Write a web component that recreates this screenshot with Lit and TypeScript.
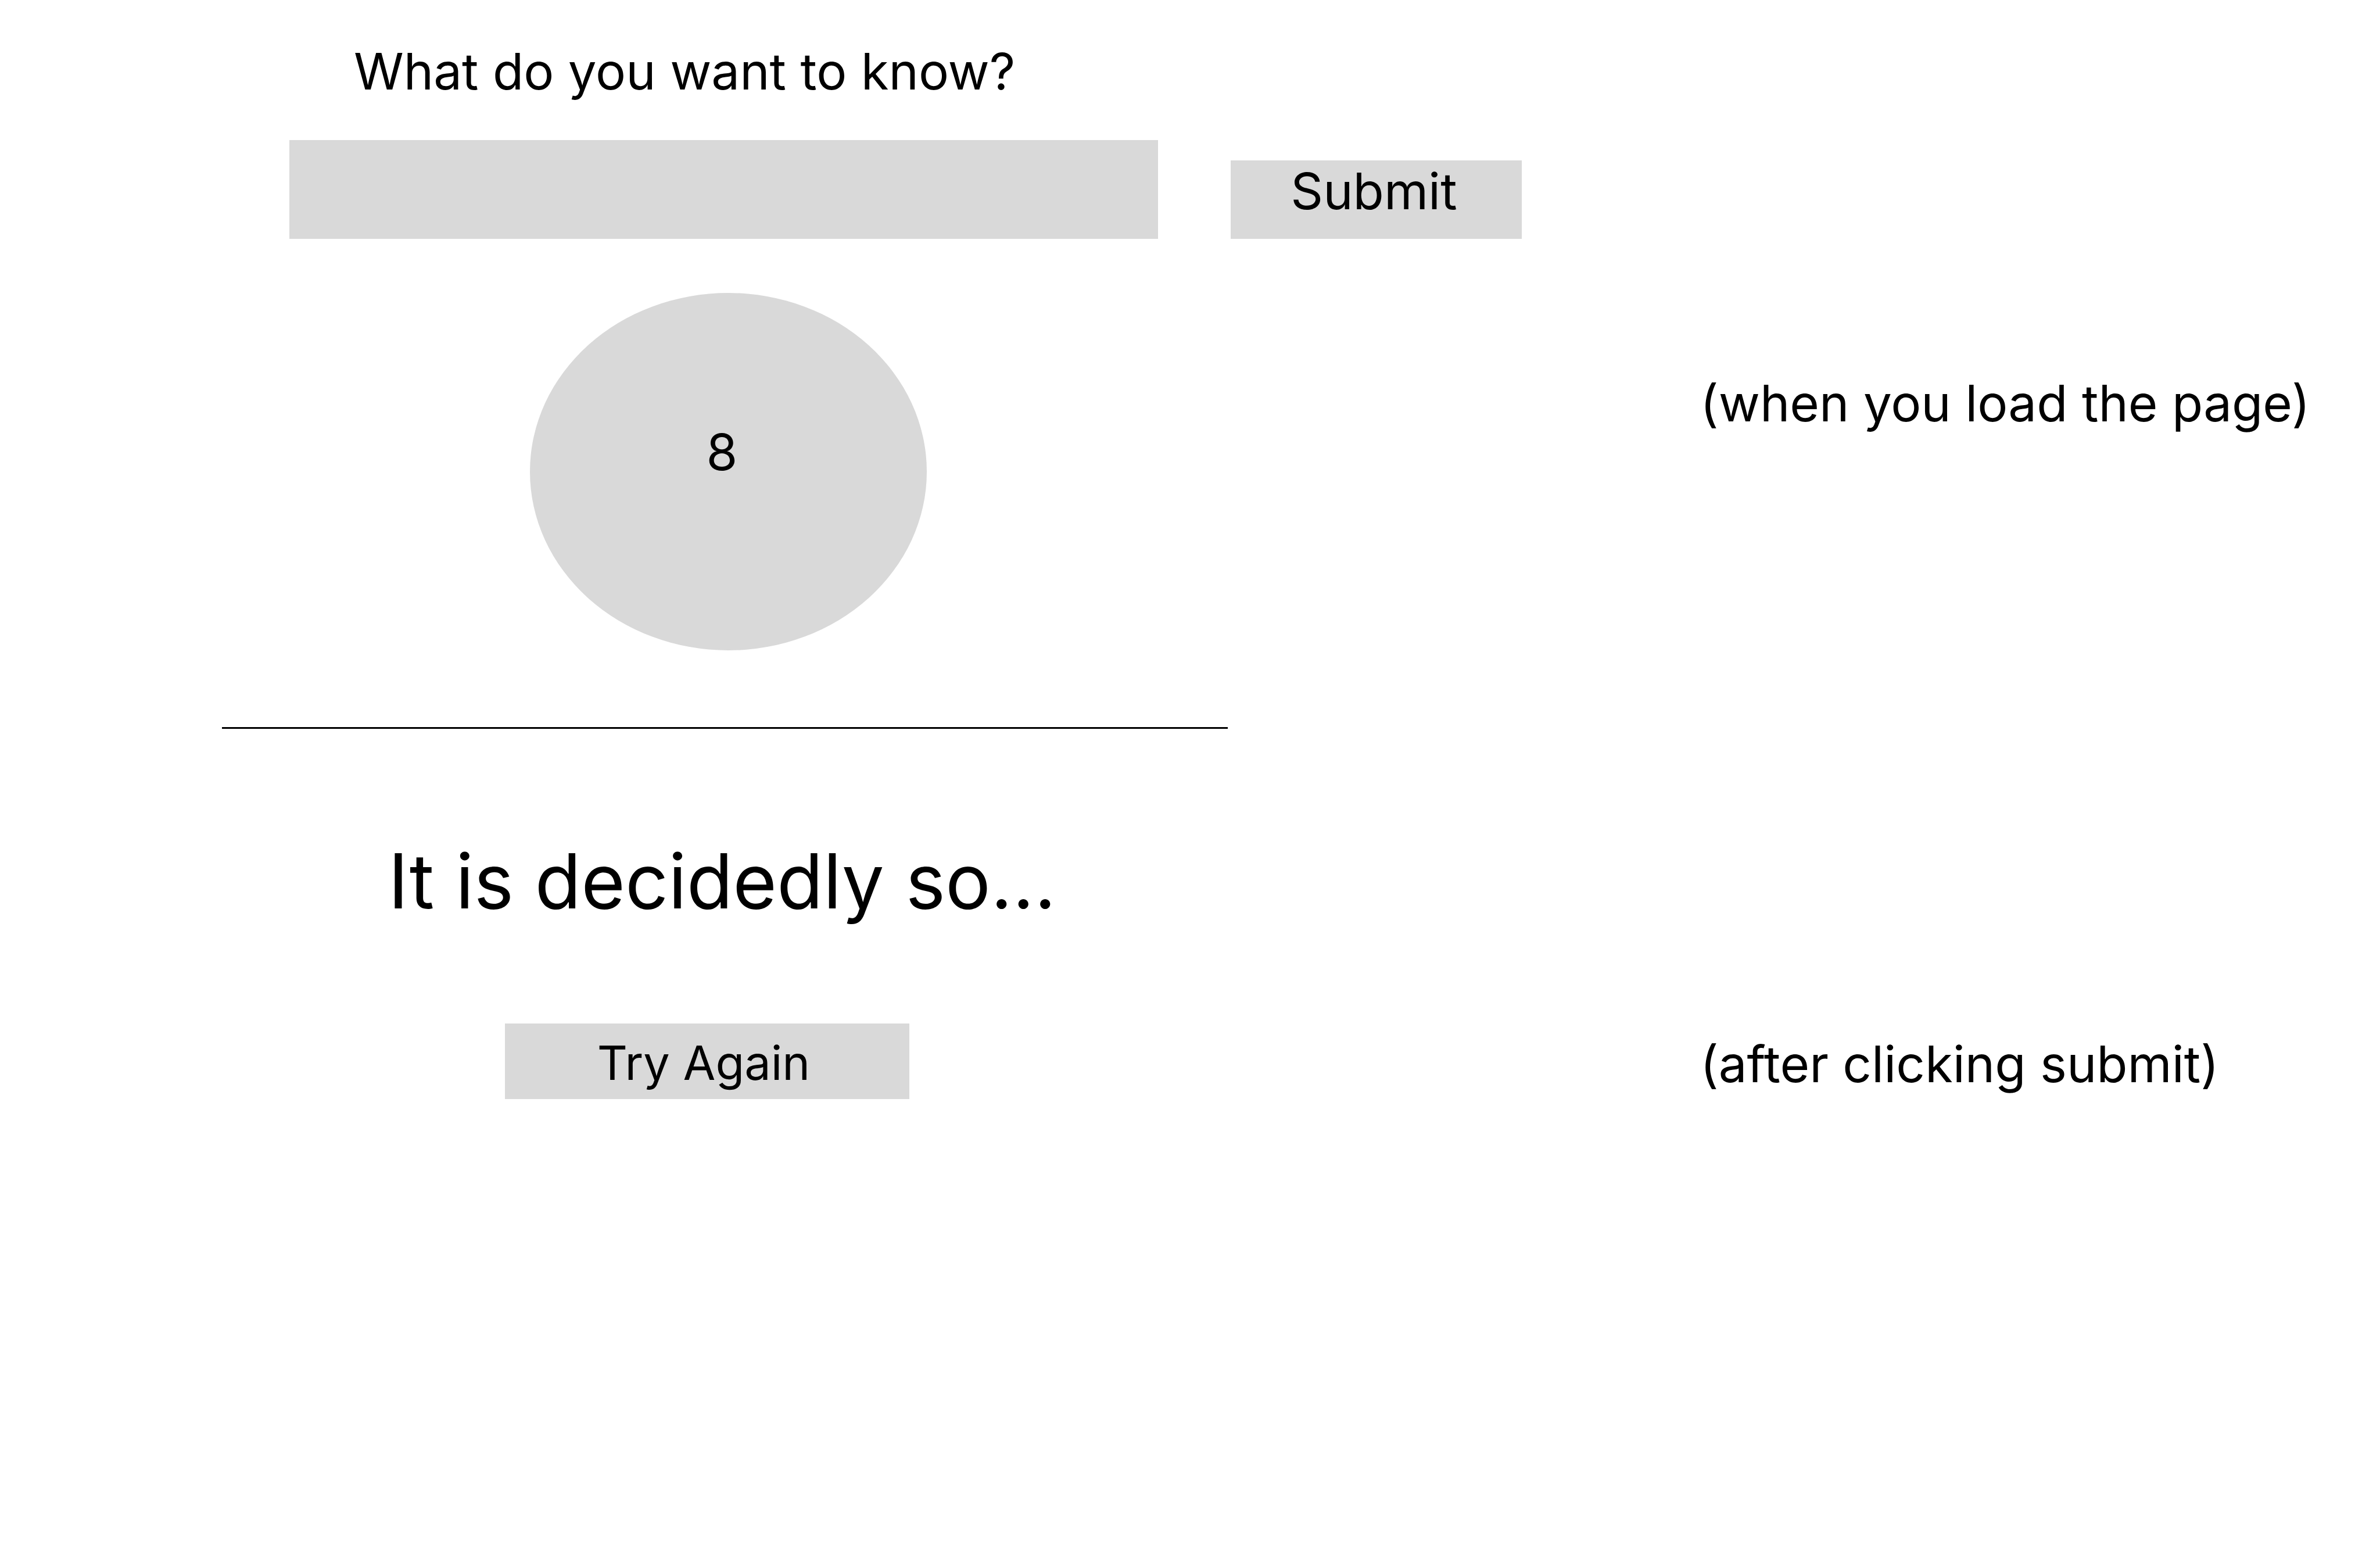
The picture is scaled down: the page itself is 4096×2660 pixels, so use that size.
import { LitElement, html, css } from "lit";
import { customElement, state } from "lit/decorators.js";

@customElement("app-root")
export class AppRoot extends LitElement {
  static styles = css`
    :host {
      display: block;
      min-height: 100vh;
      background: #fff;
      color: #000;
      font-family: Inter, "Liberation Sans", sans-serif;
      font-size: 87px;
      line-height: 106px;
    }
    * {
      box-sizing: border-box;
    }
    .view {
      display: grid;
      grid-template-columns: minmax(0, 2926fr) minmax(0, 1170fr);
    }
    .ask {
      display: flex;
      flex-direction: column;
      padding-top: 70px;
    }
    .question {
      padding-left: 609px;
      white-space: nowrap;
    }
    .row {
      display: flex;
      align-items: flex-end;
      gap: 125px;
      margin-top: 65px;
      padding: 0 307px 0 498px;
    }
    .field {
      flex: 1;
      min-width: 0;
      height: 170px;
      padding: 0 32px;
      border: 0;
      border-radius: 0;
      outline: 0;
      background: #d9d9d9;
      color: inherit;
      font: inherit;
    }
    .button {
      border: 0;
      border-radius: 0;
      background: #d9d9d9;
      color: inherit;
      font: inherit;
      white-space: nowrap;
      cursor: pointer;
    }
    .submit {
      width: 501px;
      height: 135px;
      padding: 0 8px 29px 0;
    }
    .ball {
      width: 683px;
      height: 615px;
      margin: 93px 0 132px 912px;
      padding: 221px 22px 0 0;
      border-radius: 50%;
      background: #d9d9d9;
      text-align: center;
    }
    .divider {
      width: 1731px;
      height: 3px;
      margin: 0 0 0 382px;
      border: 0;
      background: #000;
    }
    .answer {
      display: flex;
      flex-direction: column;
      align-items: flex-start;
      padding-top: 183px;
    }
    .reply {
      margin: 0;
      padding-left: 668px;
      font-size: 130px;
      font-weight: 400;
      line-height: 157px;
      white-space: nowrap;
    }
    .again {
      width: 696px;
      height: 130px;
      margin: 167px 0 0 869px;
      padding: 6px 12px 0 0;
      font-size: 81px;
      line-height: 98px;
    }
    .note {
      margin: 0;
      white-space: nowrap;
    }
    .note-load {
      padding-top: 641px;
    }
    .note-after {
      padding-top: 524px;
    }
  `;

  @state() private question = "";

  private onInput(event: Event) {
    this.question = (event.target as HTMLInputElement).value;
  }

  private onSubmit(event: Event) {
    event.preventDefault();
  }

  private onReset() {
    this.question = "";
  }

  render() {
    return html`
      <main>
        <section class="view">
          <form class="ask" @submit=${this.onSubmit}>
            <label class="question" for="question">What do you want to know?</label>
            <div class="row">
              <input
                class="field"
                id="question"
                type="text"
                autocomplete="off"
                .value=${this.question}
                @input=${this.onInput}
              />
              <button class="button submit" type="submit">Submit</button>
            </div>
            <div class="ball">8</div>
          </form>
          <p class="note note-load">(when you load the page)</p>
        </section>
        <hr class="divider" />
        <section class="view">
          <div class="answer">
            <h1 class="reply">It is decidedly so...</h1>
            <button class="button again" type="button" @click=${this.onReset}>Try Again</button>
          </div>
          <p class="note note-after">(after clicking submit)</p>
        </section>
      </main>
    `;
  }
}
